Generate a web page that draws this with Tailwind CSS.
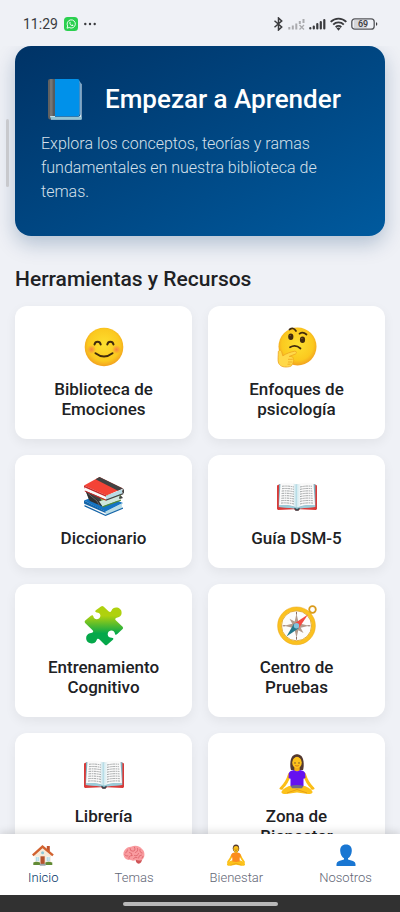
<!DOCTYPE html>
<html lang="es">
<head>
    <meta charset="UTF-8">
    <meta name="viewport" content="width=device-width, initial-scale=1.0">
    <title>Psicología - Inicio</title>
    <script src="https://cdn.jsdelivr.net/npm/@tailwindcss/browser@4"></script>
</head>
<body class="bg-[#eff1f6] font-['Roboto',sans-serif] text-[#202124]">
    <!-- Shared drawings -->
    <svg class="absolute size-0" aria-hidden="true">
        <defs>
            <radialGradient id="face" cx=".5" cy=".45" r=".55">
                <stop offset="0" stop-color="#fde030"/>
                <stop offset=".75" stop-color="#fbc91f"/>
                <stop offset="1" stop-color="#f2a01f"/>
            </radialGradient>
            <radialGradient id="cheek">
                <stop offset="0" stop-color="#f5734a" stop-opacity=".8"/>
                <stop offset="1" stop-color="#f5734a" stop-opacity="0"/>
            </radialGradient>
            <linearGradient id="green" x1="0" y1="0" x2="0" y2="1">
                <stop offset=".25" stop-color="#afd10e"/>
                <stop offset=".7" stop-color="#05a84a"/>
            </linearGradient>
            <linearGradient id="gutter">
                <stop offset="0" stop-color="#fafafa"/>
                <stop offset=".45" stop-color="#b5dce6"/>
                <stop offset=".5" stop-color="#84b5c3"/>
                <stop offset=".55" stop-color="#d6ecf1"/>
                <stop offset="1" stop-color="#fafafa"/>
            </linearGradient>
            <symbol id="open-book" viewBox="0 0 40 40">
                <path d="M0 9.500 2 8.500h36l2 1V33l-1 1-16-.8-1.500 1.300h-3L17 33.200 1 34l-1-1z" fill="#d93a38"/>
                <path d="M2 8.200h36.400V31L22 32.600 20 34l-2-1.400L1.700 31z" fill="#7fb4c3"/>
                <path d="M3.500 7.200c5-.8 12-.6 16.500 1.300v22.800c-5-2-12-2.400-18-1.700z" fill="#fafafa"/>
                <path d="M36.500 7.200c-5-.8-12-.6-16.500 1.300v22.800c5-2 12-2.400 18-1.700z" fill="#fafafa"/>
                <path d="M2 29.600c6-.8 12-.4 18 1.800 6-2.200 12-2.600 18-1.800V31l-16 1.400-2 1-2-1L2 31z" fill="#9ccbd8"/>
                <path d="M16 7.400 20 8.500l4-1.100v22.700l-4 1.300-4-1.300z" fill="url(#gutter)"/>
                <path d="M17 31.800c1 .2 2 .5 3 1.500 1-1 2-1.300 3-1.500l-1.500 3h-3z" fill="#37474f"/>
                <g fill="none" stroke="#8b8f91" stroke-width=".8" stroke-dasharray="2.600 .7 1.500 .6">
                    <path d="M5 10.300q6-.7 12 .7M5 12.700q6-.7 12 .7M4.700 15.100q6-.7 12.300.7M4.600 17.500q6-.7 12.400.7M4.500 19.900q6-.7 12.500.7M4.400 22.300q6-.7 12.600.7M4.200 24.700q6-.7 12.800.7M4 27.100q6-.7 13 .9"/>
                    <path d="M23 11q6-1.400 12-.7M23 13.400q6-1.400 12-.7M23 15.800q6-1.400 12.300-.7M23 18.200q6-1.400 12.400-.7M23 20.600q6-1.400 12.500-.7M23 23q6-1.400 12.600-.7M23 25.400q6-1.400 12.800-.7M23 28q6-1.600 13-.9"/>
                </g>
            </symbol>
        </defs>
    </svg>

    <div class="flex h-screen flex-col">
        <!-- Status bar -->
        <header class="flex shrink-0 items-center justify-between pt-[13px] pr-[22px] pb-[11px] pl-[23px] text-[#3a3b3e]">
            <div class="flex items-center gap-[6px]">
                <span class="text-[14px] leading-[22px]">11:29</span>
                <svg class="size-[14px]" viewBox="0 0 14 14">
                    <rect width="14" height="14" rx="3.500" fill="#2bd04f"/>
                    <path d="M3 11.200l.7-2.200a4.100 4.100 0 1 1 1.500 1.500z" fill="none" stroke="#fff" stroke-width=".9"/>
                    <path d="M5.500 5c.3-.4.700-.3.900.2l.3.700-.5.600c.4.800.9 1.200 1.600 1.500l.6-.6 1 .5c.2.900-.8 1.200-1.300 1.100C6.500 8.600 5 7 5.500 5z" fill="#fff"/>
                </svg>
                <svg class="h-[4px] w-[12px]" viewBox="0 0 12 4" fill="currentColor">
                    <circle cx="1.300" cy="2" r="1.200"/><circle cx="6" cy="2" r="1.200"/><circle cx="10.700" cy="2" r="1.200"/>
                </svg>
            </div>
            <div class="flex items-center gap-[4px]">
                <svg class="h-[14px] w-[11px]" viewBox="0 0 10 14" fill="none" stroke="currentColor" stroke-width="1.500">
                    <path d="M1 3.800 8.200 10 5 13V1l3.200 3L1 10.200"/>
                </svg>
                <svg class="h-[12px] w-[17px]" viewBox="0 0 17 12" fill="none" stroke="#aaabae" stroke-width="2">
                    <path d="M1.300 9v2.500M4.800 7.500v4M8.300 5.500v6M11.800 3v3M15.500 1v4"/>
                    <path d="m11.500 7 4.500 4.500m0-4.500-4.500 4.500" stroke-width="1.300"/>
                </svg>
                <svg class="h-[12px] w-[17px]" viewBox="0 0 17 12" fill="none" stroke="currentColor" stroke-width="2.200" stroke-linecap="round">
                    <path d="M1.300 10v.5M4.800 8.500v2M8.300 6v4.500M11.800 4v6.500M15.300 2v8.500"/>
                </svg>
                <svg class="h-[14px] w-[17px]" viewBox="0 0 17 14" fill="none" stroke="currentColor" stroke-width="1.900">
                    <path d="M.7 4.900a11 11 0 0 1 15.600 0M3.200 7.600a7.500 7.500 0 0 1 10.600 0M5.700 10.200a4 4 0 0 1 5.600 0"/>
                    <path d="m6.500 11.300 2 2.400 2-2.400q-2-1.500-4 0z" fill="currentColor" stroke="none"/>
                </svg>
                <svg class="h-[12px] w-[27px]" viewBox="0 0 27 12">
                    <rect x="3" y="2" width="13" height="8" fill="#d6d7da"/>
                    <rect x=".8" y=".8" width="22.400" height="10.400" rx="3" fill="none" stroke="#55565a" stroke-width="1.300"/>
                    <path d="M25 4.200q1.300.2 1.300 1.800T25 7.800z" fill="#3a3b3e"/>
                    <text x="12" y="9" text-anchor="middle" font-size="9" font-weight="500" fill="#3a3b3e">69</text>
                </svg>
            </div>
        </header>

        <main class="relative min-h-0 flex-1 overflow-y-auto px-[15px] [scrollbar-width:none]">
            <div class="absolute top-[73px] left-[6px] h-[68px] w-[3px] rounded-full bg-[#c8c9cd]"></div>

            <!-- Hero -->
            <a href="#temas" class="block rounded-[16px] bg-linear-to-br from-[#003366] to-[#005a9e] px-[26px] pt-[25px] pb-[32px] text-white shadow-[0_8px_20px_rgba(0,51,102,0.25)]">
                <div class="flex items-center gap-[16px]">
                    <svg class="size-[48px] shrink-0" viewBox="0 0 48 48">
                        <path d="M9 6h29l2.500 3v35.500H10l-2-4z" fill="#f4f9fb"/>
                        <path d="M8 39h30v3H9z" fill="#d4edf3"/>
                        <path d="M9 41.700h31.500v2.800H10z" fill="#94c4d3"/>
                        <path d="M14 4h22.500q2 0 2 2v33q0 2-2 2H14z" fill="#0091ea"/>
                        <path d="M38.500 7v32q0 2-2 2H14v.8h23.500q2-.3 2-2.300V8z" fill="#01579b"/>
                        <path d="M7 6q0-2 2-2h5v37H9l1 3.500Q7 45 7 41z" fill="#616161"/>
                        <path d="M9 4h2.500v37H9z" fill="#757575"/>
                        <path d="M12.300 4h1.400v37h-1.400z" fill="#505a60"/>
                    </svg>
                    <h1 class="text-[26px] leading-[56px] font-medium">Empezar a Aprender</h1>
                </div>
                <p class="mt-[5px] text-[16px] leading-[24px] font-light text-[#d5e0ea]">Explora los conceptos, teorías y ramas fundamentales en nuestra biblioteca de temas.</p>
            </a>

            <h2 class="mt-[30px] mb-[14px] text-[21px] leading-[26px] font-medium">Herramientas y Recursos</h2>

            <!-- Tools -->
            <div class="grid grid-cols-2 gap-[16px] pb-[16px] text-center text-[17px] leading-[20px] font-medium">
                <a href="#emociones" class="flex flex-col items-center rounded-[12px] bg-white px-[24px] py-[20px] shadow-[0_4px_12px_rgba(0,0,0,0.06)]">
                    <svg class="mb-[11px] h-[42px] w-[40px]" viewBox="0 0 40 40">
                        <circle cx="20" cy="20" r="19.300" fill="url(#face)"/>
                        <circle cx="7.500" cy="22.500" r="4.500" fill="url(#cheek)"/>
                        <circle cx="32.500" cy="22.500" r="4.500" fill="url(#cheek)"/>
                        <g fill="none" stroke="#422b0d" stroke-width="2" stroke-linecap="round">
                            <path d="M10.500 17.500c.8-3.600 5.400-3.600 6.200 0M23.300 17.500c.8-3.600 5.400-3.600 6.200 0"/>
                            <path d="M11.500 26.200q8.500 6.500 17 0"/>
                        </g>
                    </svg>
                    <span>Biblioteca de Emociones</span>
                </a>
                <a href="#enfoques" class="flex flex-col items-center rounded-[12px] bg-white px-[24px] py-[20px] shadow-[0_4px_12px_rgba(0,0,0,0.06)]">
                    <svg class="mb-[11px] h-[42px] w-[40px]" viewBox="0 0 40 40">
                        <circle cx="20.500" cy="19.500" r="19" fill="url(#face)"/>
                        <g fill="#422b0d">
                            <ellipse cx="13.800" cy="9.700" rx="2.600" ry="3.200"/>
                            <ellipse cx="25.500" cy="12.700" rx="2.600" ry="3.200"/>
                        </g>
                        <circle cx="13.200" cy="8.600" r=".7" fill="#8a6330"/>
                        <circle cx="24.900" cy="11.600" r=".7" fill="#8a6330"/>
                        <g fill="none" stroke="#422b0d" stroke-width="1.700" stroke-linecap="round">
                            <path d="M12.500 2.500q4-2.800 6.500 1.500M22.500 6.700q3.500-2.300 7 .8"/>
                            <path d="M13 20.300q5.500-3.300 10.500 1.200"/>
                        </g>
                        <path d="M1.300 25c0-1.900 2.700-2.300 3.300-.4l1.200 4.200c3.400-2.300 7.800-3.800 11.900-4.600 2-.3 2.400 2.200.6 2.900l-6 2.300c3.600.2 4.500 1.300 3.700 2.800 1 .7 1 2-.1 2.700.5.900 0 2-1 2.400.3 1-.6 2-2.300 2.300-4.800 1-9.300.3-11-3.500-1.100-2.600-.2-7.700-.3-11.100z" fill="#ffd94a" stroke="#eda51e" stroke-width=".8"/>
                        <path d="M11 32.300h4.500M11 35h4M10.500 37.200h3" stroke="#eda51e" stroke-width=".8"/>
                    </svg>
                    <span>Enfoques de psicología</span>
                </a>
                <a href="#diccionario" class="flex flex-col items-center rounded-[12px] bg-white px-[24px] py-[20px] shadow-[0_4px_12px_rgba(0,0,0,0.06)]">
                    <svg class="mb-[11px] h-[42px] w-[40px]" viewBox="0 0 40 40">
                        <path d="M0 24.500 17 18l22 9-17.500 9z" fill="#1574c4"/>
                        <path d="M.8 26.500 21.500 35.500v4L1 30z" fill="#fafafa"/>
                        <path d="M21.500 35.500 38.500 27q-1.500 2.500 0 5l-17 7.500z" fill="#b9dce6"/>
                        <path d="M0 24.500q-.8 1.800.3 3.300L21.500 37v-1.500zM.5 29l21 9.700L39 31.500v1.300L21.500 40 .5 30.500z" fill="#1565a8"/>
                        <path d="M1.500 14.500 22 22l14-3.500 3 3.500-22 7-12-5z" fill="#424242"/>
                        <path d="M16 21.500 34 16l3 4-18.500 7z" fill="#7cb342"/>
                        <path d="M15 25.500 35.500 19q-.8 2.500.5 5L18.500 30.500z" fill="#cfe6dc"/>
                        <path d="M1.500 14.500 14 24.500l4.500 6L6 25z" fill="#303030"/>
                        <path d="M4 17.500 13 25l2.500 4.500" fill="none" stroke="#757575" stroke-width=".8"/>
                        <path d="M18.500 30.300 37 23.500v1.200L18.500 31.500z" fill="#558b2f"/>
                        <path d="M0 9.500 15.500 1 39 12.500 22.500 19.500z" fill="#f44336"/>
                        <path d="M11.500 3.200 15.500 1 39 12.500 34 14.700z" fill="#424242"/>
                        <path d="M.8 11 22 20v3.800L1 14.800z" fill="#fafafa"/>
                        <path d="M22 20 38.500 13q-1.300 2.400 0 4.500L22 23.800z" fill="#b9dce6"/>
                        <path d="M0 9.500q-1 2 .3 3.300v-1.600L22 20.700v-1.400zM.8 14.500 22 23.500v1.300L.8 15.600z" fill="#c62828"/>
                        <path d="M22 23.500 39.300 17v1.300L22 24.800zM39 12.500l1 1.500v2.800l-1 1-1-2.300z" fill="#424242"/>
                    </svg>
                    <span>Diccionario</span>
                </a>
                <a href="#dsm5" class="flex flex-col items-center rounded-[12px] bg-white px-[24px] py-[20px] shadow-[0_4px_12px_rgba(0,0,0,0.06)]">
                    <svg class="mb-[11px] h-[42px] w-[40px]"><use href="#open-book"/></svg>
                    <span>Guía DSM-5</span>
                </a>
                <a href="#entrenamiento" class="flex flex-col items-center rounded-[12px] bg-white px-[24px] py-[20px] shadow-[0_4px_12px_rgba(0,0,0,0.06)]">
                    <svg class="mb-[11px] h-[42px] w-[40px]" viewBox="0 0 40 40">
                        <path d="M17 1.500q1.200-1.200 2.500 0l5.300 5q1.700 1.200 2.600-.8c2-5.600 10.600-3.500 10.200 2 0 3.500-2.700 4.500-5 5-1.600.4-1.700 1.800-.6 2.900l6.600 6.200q1.100 1.200 0 2.300l-5.300 5c-1.300 1.200-2.200.9-2.400-.6-.7-4.700-7.500-3.500-7.200.9.100 2.300 2 3.300 4 3.300 1.800 0 2.200 1 1.200 2l-5.700 5q-1.200 1.100-2.400 0l-5.300-5.200c-1.200-1.100-2.300-.8-2.900.8-2 5.400-11.200 3.500-10.400-2.800.5-3.300 3-4.200 5.800-4.700 1.400-.3 1.600-1.500.6-2.500L1.100 17.900q-1.100-1.200.1-2.400l5.700-4.700c1.100-.9 2.200-.6 2.500.8.900 4.300 7.300 3 7-1.100-.1-2.200-1.800-3-3.700-3.100-1.500-.1-1.900-1.100-.9-2.100z" fill="url(#green)"/>
                    </svg>
                    <span>Entrenamiento Cognitivo</span>
                </a>
                <a href="#pruebas" class="flex flex-col items-center rounded-[12px] bg-white px-[24px] py-[20px] shadow-[0_4px_12px_rgba(0,0,0,0.06)]">
                    <svg class="mb-[11px] h-[42px] w-[40px]" viewBox="0 0 40 40">
                        <circle cx="35.500" cy="4.500" r="3.300" fill="none" stroke="#d99a1c" stroke-width="1.800"/>
                        <path d="m30.500 7.500 2-2 2.500 2.500-2 2z" fill="#e0a31e"/>
                        <circle cx="19.500" cy="20.800" r="17" fill="#fcfcfc" stroke="#fbc11f" stroke-width="3.800"/>
                        <circle cx="19.500" cy="20.800" r="15" fill="none" stroke="#dc9c17" stroke-width=".8"/>
                        <circle cx="19.500" cy="20.800" r="18.900" fill="none" stroke="#e9a61c" stroke-width=".5"/>
                        <path d="m19.500 8.500 1.800 8 5.200-2.700-2.800 5 8.300 2-8.300 2 2.800 5.300-5.200-2.800-1.800 7.800-1.800-7.800-5.200 2.800 2.800-5.300-8.300-2 8.300-2-2.800-5 5.200 2.700z" fill="#b39a8b"/>
                        <path d="M19.500 6.800v2.700M19.500 32v2.700M5.600 20.800h2.700M30.700 20.800h2.700" stroke="#8d6e63" stroke-width="1"/>
                        <path d="M31 9.500 22 23l-4.700-4.400z" fill="#f44a40"/>
                        <path d="M9.500 31.500 17 18.600l4.700 4.600z" fill="#23778b"/>
                        <circle cx="19.500" cy="20.800" r="2.700" fill="#82c3dc"/>
                    </svg>
                    <span>Centro de Pruebas</span>
                </a>
                <a href="#libreria" class="flex flex-col items-center rounded-[12px] bg-white px-[24px] py-[20px] shadow-[0_4px_12px_rgba(0,0,0,0.06)]">
                    <svg class="mb-[11px] h-[42px] w-[40px]"><use href="#open-book"/></svg>
                    <span>Librería</span>
                </a>
                <a href="#bienestar" class="flex flex-col items-center rounded-[12px] bg-white px-[24px] py-[20px] shadow-[0_4px_12px_rgba(0,0,0,0.06)]">
                    <svg class="mb-[11px] h-[42px] w-[40px]" viewBox="0 0 40 40">
                        <path d="M14 16c-1-3-.9-8 0-11C15.300 1.200 18 .3 20 .3s4.700.9 6 4.700c.9 3 1 8 0 11z" fill="#543930"/>
                        <path d="M12.500 20.500Q10 29 4.500 34M27.500 20.500Q30 29 35.500 34" fill="none" stroke="#fcbf16" stroke-width="3" stroke-linecap="round"/>
                        <path d="M4.200 33.200q-2 .2-1.800 1.800 2.500 1 5 .3zM35.800 33.200q2 .2 1.800 1.800-2.500 1-5 .3z" fill="#f9b913"/>
                        <path d="M12 32q-4.500 1.500-7 4.800c-1.500 2.200.5 3.500 4 3.200l11-1.500 11 1.500c3.500.3 5.500-1 4-3.200Q32.500 33.500 28 32z" fill="#fcc21b"/>
                        <path d="m10 39 10-3.500L30 39" fill="none" stroke="#e59a12" stroke-width=".9"/>
                        <path d="M17.300 11h5.400v6.500h-5.400z" fill="#f3ad13"/>
                        <path d="M17 16q3 2.500 6 0 4 .5 5.200 3l.3 5-2 .8V32q-6.500 2-13 0v-7.200l-2-.8.3-5q1.200-2.500 5.200-3z" fill="#6511ef"/>
                        <path d="M13.500 31.700q6.500-1.200 13 0l-1.500 2.600H15z" fill="#6f6a86"/>
                        <ellipse cx="20" cy="8.500" rx="4.800" ry="5.700" fill="#fcc21b"/>
                        <path d="M15 8q.7-4.500 5-6 4.300 1.500 5 6V3.500L20 .8 15 3.500z" fill="#543930"/>
                        <path d="M17 8.800q1 .7 2 0M21 8.800q1 .7 2 0" fill="none" stroke="#543930" stroke-width=".7"/>
                        <path d="M18.200 11.500q1.800 1.200 3.600 0" fill="none" stroke="#c9641b" stroke-width=".8"/>
                    </svg>
                    <span>Zona de Bienestar</span>
                </a>
            </div>
        </main>

        <!-- Bottom navigation -->
        <nav class="relative flex shrink-0 justify-around bg-white pt-[10px] pb-[8px] text-[13px] leading-[18px] font-light text-[#5f6675] shadow-[0_-2px_8px_rgba(0,0,0,0.14)]">
            <a href="#inicio" class="flex flex-col items-center gap-[3px] text-[#003366]" aria-current="page">
                <svg class="size-[22px]" viewBox="0 0 22 22">
                    <path d="M14.800 2h3v5h-3z" fill="#c0532d"/>
                    <path d="M2.500 9.500 10.500 3l8.500 6.500V20h-16z" fill="#f6ead9"/>
                    <path d="M.8 11.300 10.500 2.500 21 11.300" fill="none" stroke="#d2622f" stroke-width="2.400"/>
                    <path d="M8.500 12.300h4.200V20H8.500z" fill="#b5532e"/>
                    <circle cx="10.600" cy="8.700" r="1.500" fill="#8ecadb"/>
                    <path d="M3.500 13h3.700v4.200H3.500zM14.300 13H18v4.200h-3.700z" fill="#8ecadb" stroke="#fff" stroke-width=".6"/>
                    <path d="M5.300 13v4.200M3.500 15h3.700M16.200 13v4.200M14.300 15H18" stroke="#fff" stroke-width=".5"/>
                    <path d="M1.300 18.500q3-1.500 6.700 0v2.500H1.300zM13.300 18.500q3-1.500 7 0v2.500h-7z" fill="#628b35"/>
                    <path d="M7.800 19.800h5.800v1.900H7.800z" fill="#98a1a6"/>
                </svg>
                <span>Inicio</span>
            </a>
            <a href="#temas" class="flex flex-col items-center gap-[3px]">
                <svg class="size-[22px]" viewBox="0 0 22 22">
                    <path d="M12.500 15.500q3.700.2 6.500-.5 0 4.200-3.500 4.700-2.500-.5-3-4.200z" fill="#cf5557"/>
                    <path d="M.5 11C-.2 6.500 4 2.500 8 2.700c4-2 9.500-.7 11 2.300 3 2 3.300 8 .5 10.500-2 1.700-5 1-6.500.3-2 1.400-4.800 1-6 0-3 .7-6-1.300-6.500-4.800z" fill="#f99b9f"/>
                    <g fill="none" stroke="#db6168" stroke-width=".8" stroke-linecap="round">
                        <path d="M2.500 9q2-.7 2-3M5 12q-2.300.5-3.300-1.300M7 4.500q0 3 3 2.700t1.500-4M6.500 8.500q3 .3 2.500 3M9 11.500q-3.500 0-3 3M12.500 8.500q3-1 2-4M11.500 11.500q3.200 1.300 4-2M17 5.500q-.8 3 2 3.500M18.500 11q-3 0-3 3M10.500 14.500q1.500-1.700 3.500-1M19 14l1-1.700"/>
                    </g>
                </svg>
                <span>Temas</span>
            </a>
            <a href="#bienestar" class="flex flex-col items-center gap-[3px]">
                <svg class="size-[22px]" viewBox="0 0 22 22">
                    <path d="M6.800 11.500Q5.500 15 3 18M15.200 11.500q1.300 3.500 3.800 6.500" fill="none" stroke="#fcbf16" stroke-width="1.900" stroke-linecap="round"/>
                    <path d="M6.500 16.500Q3 17.500 2 19.700 1.500 22 5 21.700l6-.9 6 .9q3.500.3 3-2-1-2.200-4.500-3.200z" fill="#fcc21b"/>
                    <path d="m5.500 21.300 5.500-2 5.500 2" fill="none" stroke="#e59a12" stroke-width=".6"/>
                    <path d="M9.500 6h3v3.500h-3z" fill="#f3ad13"/>
                    <path d="M9.300 8.500q1.700 1 3.400 0 2.700.3 3 2v2.700l-1 .4v4q-3.700.9-7.400 0v-4l-1-.4v-2.700q.3-1.700 3-2z" fill="#fb8c1e"/>
                    <ellipse cx="11" cy="4.300" rx="3.200" ry="3.800" fill="#543930"/>
                    <ellipse cx="11" cy="5" rx="2.600" ry="3" fill="#fcc21b"/>
                    <path d="M9.500 5.200h1M11.500 5.200h1M10.200 6.600h1.600" stroke="#7a4a20" stroke-width=".5"/>
                </svg>
                <span>Bienestar</span>
            </a>
            <a href="#nosotros" class="flex flex-col items-center gap-[3px]">
                <svg class="size-[22px]" viewBox="0 0 22 22" fill="#1976d2">
                    <path d="M11 .5c4 0 6 2.500 5.800 6.500-.2 3.500-1.800 6.300-3.800 7.200v1.300l5 1.500q2.500.8 2.500 3V22h-19v-2q0-2.200 2.500-3l5-1.500v-1.300C7 13.300 5.400 10.500 5.200 7 5 3 7 .5 11 .5z"/>
                </svg>
                <span>Nosotros</span>
            </a>
        </nav>

        <!-- Gesture bar -->
        <footer class="relative flex shrink-0 justify-center bg-[#313131] pt-[7px] pb-[6px]">
            <div class="h-[4px] w-[155px] rounded-full bg-[#b9b9b9]"></div>
        </footer>
    </div>
</body>
</html>
